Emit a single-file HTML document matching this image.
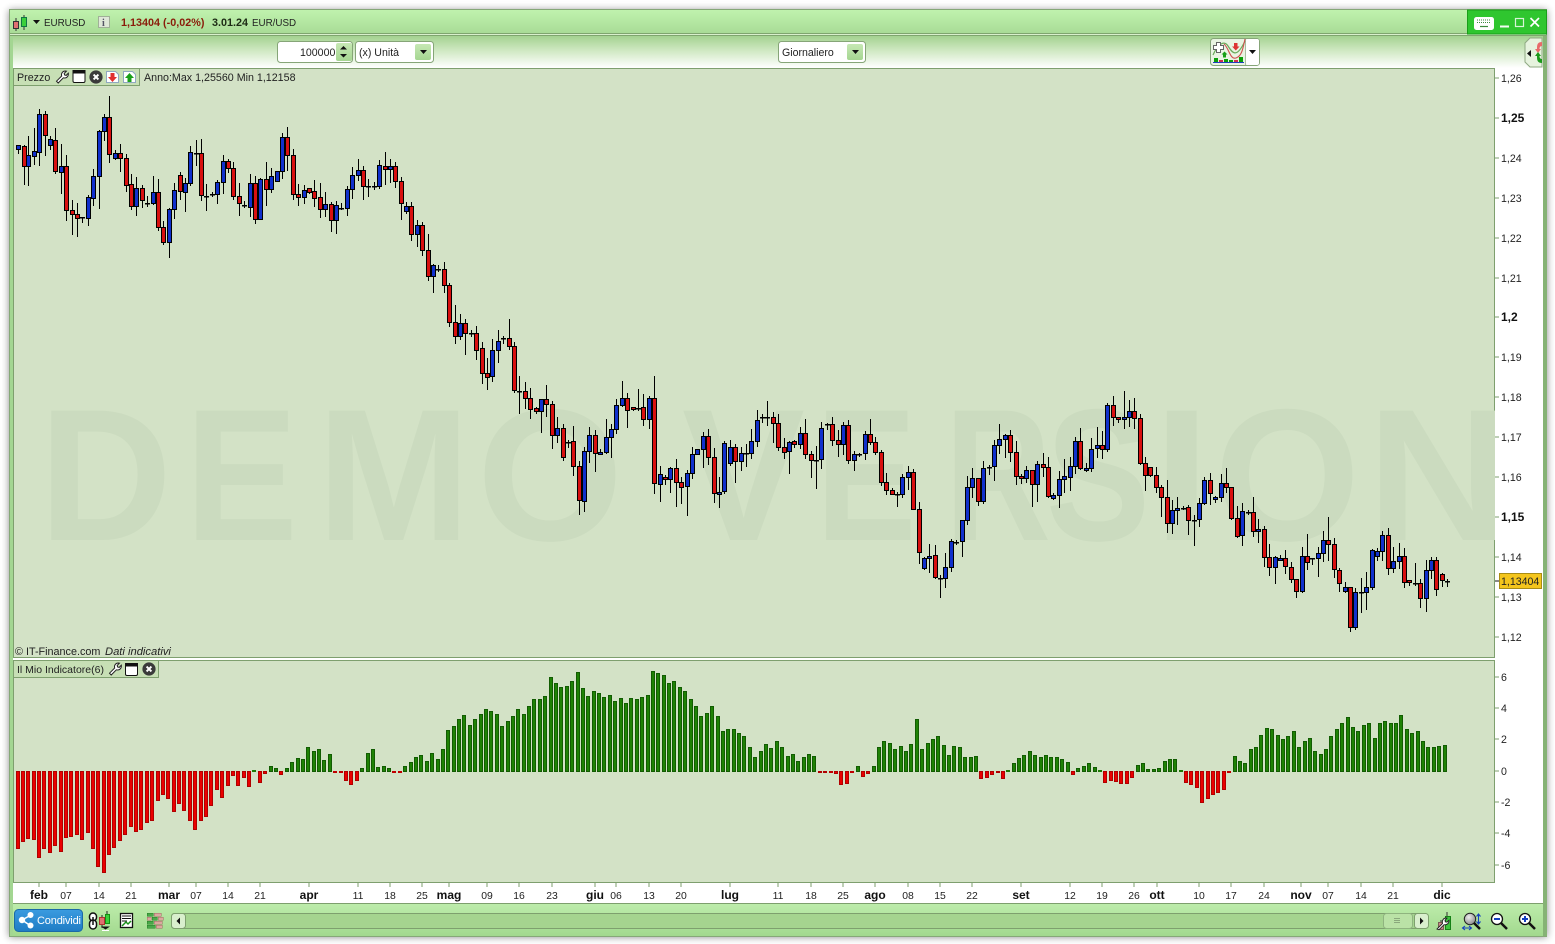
<!DOCTYPE html>
<html lang="it"><head><meta charset="utf-8"><title>EURUSD</title>
<style>
html,body{margin:0;padding:0;background:#fff;width:1555px;height:944px;overflow:hidden}
svg{position:absolute;left:0;top:0;display:block}
text{font-family:"Liberation Sans",Arial,sans-serif;font-size:10.6px;fill:#222}
.b{font-weight:bold;font-size:12px;fill:#111}
.a{font-size:10.4px;fill:#222}
.m{text-anchor:middle}
.w{font-size:188px;font-weight:bold;fill:#cbdbbf}
</style></head><body>
<svg width="1555" height="944" viewBox="0 0 1555 944" xmlns="http://www.w3.org/2000/svg">
<defs>
<linearGradient id="gt" x1="0" y1="0" x2="0" y2="1"><stop offset="0" stop-color="#c0f2ae"/><stop offset="1" stop-color="#a9dc97"/></linearGradient>
<linearGradient id="gb" x1="0" y1="0" x2="0" y2="1"><stop offset="0" stop-color="#bdecab"/><stop offset="1" stop-color="#a2d98e"/></linearGradient>
<linearGradient id="gr" x1="0" y1="0" x2="0" y2="1"><stop offset="0" stop-color="#a4d290"/><stop offset=".45" stop-color="#cfe8c2"/><stop offset="1" stop-color="#fff"/></linearGradient>
<linearGradient id="gbtn" x1="0" y1="0" x2="0" y2="1"><stop offset="0" stop-color="#c6e8b4"/><stop offset="1" stop-color="#a5d691"/></linearGradient>
<linearGradient id="gblue" x1="0" y1="0" x2="0" y2="1"><stop offset="0" stop-color="#3a9be0"/><stop offset="1" stop-color="#1f7cc4"/></linearGradient>
<radialGradient id="gball" cx=".4" cy=".35" r=".7"><stop offset="0" stop-color="#eee"/><stop offset="1" stop-color="#888"/></radialGradient>
<filter id="sh" x="-2%" y="-2%" width="104%" height="104%"><feGaussianBlur stdDeviation="4"/></filter>
<clipPath id="cp"><rect x="14" y="69" width="1481" height="588"/></clipPath>
<symbol id="wr" viewBox="0 0 14 14"><path d="M1.5 11.2 L6.7 6 C5.9 3.4 7.6 1 10.4 1 L11.4 1.2 L9.2 3.4 L9.6 5 L11.2 5.4 L13.3 3.2 C13.8 6.3 11.4 8.7 8.4 7.8 L3.2 13 Z" fill="#fff" stroke="#222" stroke-width="1"/></symbol>
<symbol id="wn" viewBox="0 0 13 13"><rect x=".5" y=".5" width="12" height="12" rx="1.5" fill="#fff" stroke="#111"/><rect x="0" y="0" width="13" height="3.5" fill="#111"/></symbol>
<symbol id="cl" viewBox="0 0 14 14"><circle cx="7" cy="7" r="6.6" fill="#3a3a3a"/><path d="M4.6 4.6 L9.4 9.4 M9.4 4.6 L4.6 9.4" stroke="#fff" stroke-width="2"/></symbol>
</defs>

<!-- window -->
<rect x="9" y="10" width="1538" height="927" fill="#000" opacity=".45" filter="url(#sh)"/>
<rect x="9.5" y="9.5" width="1537" height="927" fill="#8ab879" stroke="#86a878"/>
<rect x="11" y="11" width="1532" height="925" fill="#a8dc98"/>
<rect x="10" y="10" width="1536" height="23" fill="url(#gt)"/>
<rect x="10" y="33" width="1536" height="1" fill="#7fa56f"/>
<rect x="10" y="34" width="1536" height="1" fill="#d8f0cc"/>
<rect x="10" y="35" width="1536" height="1" fill="#7fa56f"/>
<rect x="13" y="36" width="1530" height="32" fill="url(#gr)"/>
<rect x="13" y="68" width="1530" height="836" fill="#fff"/>
<rect x="10" y="36" width="3" height="900" fill="#a3d692"/>
<rect x="1543" y="36" width="4" height="900" fill="#86b375"/>

<!-- panes -->
<rect x="13.5" y="68.5" width="1481" height="589" fill="#d3e2c6" stroke="#7e9f6e"/>
<rect x="13.5" y="660.5" width="1481" height="222" fill="#d3e2c6" stroke="#7e9f6e"/>

<!-- watermark -->
<g clip-path="url(#cp)">
<text class="w" transform="translate(39 540) scale(.98 1)">D</text>
<text class="w" transform="translate(185 540) scale(.9 1)">E</text>
<text class="w" transform="translate(317 540) scale(.98 1)">M</text>
<text class="w" transform="translate(477 540)">O</text>
<text class="w" transform="translate(682 540) scale(.98 1)">V</text>
<text class="w" transform="translate(816 540) scale(.8 1)">E</text>
<text class="w" transform="translate(945 540) scale(.78 1)">R</text>
<text class="w" transform="translate(1046 540) scale(.83 1)">S</text>
<text class="w" transform="translate(1153 540) scale(1.1 1)">I</text>
<text class="w" transform="translate(1214 540)">O</text>
<text class="w" transform="translate(1367 540) scale(1.05 1)">N</text>
</g>

<!-- chart content -->
<g id="ind" shape-rendering="crispEdges"></g>
<g id="cnd" shape-rendering="crispEdges"></g>

<!-- price axis -->
<g stroke="#7e9f6e" shape-rendering="crispEdges">
<path d="M1495 78h4M1495 118h4M1495 158h4M1495 198h4M1495 238h4M1495 278h4M1495 317h4M1495 357h4M1495 397h4M1495 437h4M1495 477h4M1495 517h4M1495 557h4M1495 597h4M1495 637h4M1495 677h4M1495 708h4M1495 739h4M1495 771h4M1495 802h4M1495 833h4M1495 865h4"/>
</g>
<path d="M1495 581h4" stroke="#111" shape-rendering="crispEdges"/>
<g>
<text x="1501" y="82">1,26</text><text x="1501" y="122" class="b">1,25</text><text x="1501" y="162">1,24</text>
<text x="1501" y="202">1,23</text><text x="1501" y="242">1,22</text><text x="1501" y="282">1,21</text>
<text x="1501" y="321" class="b">1,2</text><text x="1501" y="361">1,19</text><text x="1501" y="401">1,18</text>
<text x="1501" y="441">1,17</text><text x="1501" y="481">1,16</text><text x="1501" y="521" class="b">1,15</text>
<text x="1501" y="561">1,14</text><text x="1501" y="601">1,13</text><text x="1501" y="641">1,12</text>
<text x="1501" y="681">6</text><text x="1501" y="712">4</text><text x="1501" y="743">2</text><text x="1501" y="775">0</text>
<text x="1501" y="806">-2</text><text x="1501" y="837">-4</text><text x="1501" y="869">-6</text>
</g>
<rect x="1499.5" y="573.5" width="42" height="15" fill="#f4c51c" stroke="#a98c14" shape-rendering="crispEdges"/>
<text x="1501" y="585" style="font-size:10.6px;fill:#222">1,13404</text>

<!-- date axis -->
<g stroke="#7e9f6e" shape-rendering="crispEdges"><path d="M39 883v4M66 883v4M99 883v4M131 883v4M169 883v4M196 883v4M228 883v4M260 883v4M309 883v4M358 883v4M390 883v4M422 883v4M449 883v4M487 883v4M519 883v4M552 883v4M595 883v4M616 883v4M649 883v4M681 883v4M730 883v4M778 883v4M811 883v4M843 883v4M875 883v4M908 883v4M940 883v4M972 883v4M1021 883v4M1070 883v4M1102 883v4M1134 883v4M1157 883v4M1199 883v4M1231 883v4M1264 883v4M1301 883v4M1328 883v4M1361 883v4M1393 883v4M1442 883v4"/></g>
<g class="m">
<text class="b m" x="39" y="899">feb</text><text class="a m" x="66" y="899">07</text><text class="a m" x="99" y="899">14</text><text class="a m" x="131" y="899">21</text>
<text class="b m" x="169" y="899">mar</text><text class="a m" x="196" y="899">07</text><text class="a m" x="228" y="899">14</text><text class="a m" x="260" y="899">21</text>
<text class="b m" x="309" y="899">apr</text><text class="a m" x="358" y="899">11</text><text class="a m" x="390" y="899">18</text><text class="a m" x="422" y="899">25</text>
<text class="b m" x="449" y="899">mag</text><text class="a m" x="487" y="899">09</text><text class="a m" x="519" y="899">16</text><text class="a m" x="552" y="899">23</text>
<text class="b m" x="595" y="899">giu</text><text class="a m" x="616" y="899">06</text><text class="a m" x="649" y="899">13</text><text class="a m" x="681" y="899">20</text>
<text class="b m" x="730" y="899">lug</text><text class="a m" x="778" y="899">11</text><text class="a m" x="811" y="899">18</text><text class="a m" x="843" y="899">25</text>
<text class="b m" x="875" y="899">ago</text><text class="a m" x="908" y="899">08</text><text class="a m" x="940" y="899">15</text><text class="a m" x="972" y="899">22</text>
<text class="b m" x="1021" y="899">set</text><text class="a m" x="1070" y="899">12</text><text class="a m" x="1102" y="899">19</text><text class="a m" x="1134" y="899">26</text>
<text class="b m" x="1157" y="899">ott</text><text class="a m" x="1199" y="899">10</text><text class="a m" x="1231" y="899">17</text><text class="a m" x="1264" y="899">24</text>
<text class="b m" x="1301" y="899">nov</text><text class="a m" x="1328" y="899">07</text><text class="a m" x="1361" y="899">14</text><text class="a m" x="1393" y="899">21</text>
<text class="b m" x="1442" y="899">dic</text>
</g>

<!-- title bar -->
<g shape-rendering="crispEdges">
<path d="M16 18v13M24 15v15" stroke="#333"/>
<rect x="13.5" y="21.5" width="5" height="7" fill="#e07070" stroke="#333"/>
<rect x="21.5" y="17.5" width="5" height="9" fill="#3bd03b" stroke="#174"/>
</g>
<path d="M33 20h7l-3.500 4z" fill="#111"/>
<text x="44" y="26" style="font-size:9.8px">EURUSD</text>
<rect x="98.5" y="16.5" width="11" height="11" fill="#dfe8d8" stroke="#a0b098" shape-rendering="crispEdges"/>
<text x="102" y="26" style="font-size:10px;font-family:'Liberation Serif',serif;font-weight:bold;fill:#556">i</text>
<text x="121" y="26" style="font-size:10.8px;font-weight:bold;fill:#8a1c0a">1,13404 (-0,02%)</text>
<text x="212" y="26" style="font-size:10.8px;font-weight:bold;fill:#1c2a14">3.01.24</text>
<text x="252" y="26" style="font-size:9.8px">EUR/USD</text>

<!-- window controls -->
<rect x="1467.5" y="10" width="79" height="24" fill="#2fc62f" stroke="#1a9e1a" shape-rendering="crispEdges"/>
<rect x="1474" y="17" width="20" height="13" rx="2.5" fill="#fff"/>
<path d="M1477 20h14M1477 22.500h14" stroke="#3c8a3c" stroke-width="1" stroke-dasharray="1 1"/>
<path d="M1480 26.500h8" stroke="#3c8a3c" stroke-width="1.200"/>
<path d="M1500 26.500h9" stroke="#fff" stroke-width="2" opacity=".95"/>
<rect x="1515.500" y="18.500" width="8" height="8" fill="none" stroke="#d8f5d8" stroke-width="1.200"/>
<path d="M1530.500 18l8.500 8.500M1539 18l-8.500 8.500" stroke="#fff" stroke-width="1.700"/>

<!-- toolbar -->
<rect x="277.500" y="41.500" width="75" height="21" rx="3" fill="#fff" stroke="#86a578"/>
<text x="300" y="56" style="font-size:10.6px">100000</text>
<rect x="336" y="43" width="16" height="18" rx="2" fill="url(#gbtn)"/>
<path d="M340 49.500h7l-3.500-3.500zM340 54h7l-3.500 3.500z" fill="#111"/>
<rect x="355.500" y="41.500" width="78" height="21" rx="3" fill="#fff" stroke="#86a578"/>
<text x="359" y="56" style="font-size:10.6px">(x) Unità</text>
<rect x="415" y="44" width="16" height="16" rx="2" fill="url(#gbtn)"/>
<path d="M420 50h7l-3.500 4z" fill="#111"/>
<rect x="778.500" y="41.500" width="87" height="21" rx="3" fill="#fff" stroke="#86a578"/>
<text x="782" y="56" style="font-size:10.6px">Giornaliero</text>
<rect x="847" y="44" width="16" height="16" rx="2" fill="url(#gbtn)"/>
<path d="M852 50h7l-3.500 4z" fill="#111"/>

<!-- chart type button -->
<rect x="1210.500" y="38.500" width="49" height="27" rx="3" fill="#e9f4e2" stroke="#86a578"/>
<rect x="1246" y="39" width="13" height="26" rx="2" fill="#fff"/>
<path d="M1245.500 39v26" stroke="#a8bda0"/>
<path d="M1249 50h7l-3.500 4z" fill="#111"/>
<path d="M1213 55C1218 44 1224 40 1228 46S1236 60 1245 41" fill="none" stroke="#6aaa5a" stroke-width="1.200"/>
<path d="M1224 44C1229 48 1230 60 1236 58S1243 48 1245 39" fill="none" stroke="#d05050" stroke-width="1.100"/>
<path d="M1216.500 42.500h4v3h3v4h-3v3h-4v-3h-3v-4h3z" fill="#fff" stroke="#666"/>
<path d="M1234 43h3.500v3.500h2l-3.700 4-3.700-4h1.900z" fill="#dd3333"/>
<path d="M1224.500 51.500l3 3h-1.500v3h-3v-3h-1.500z" fill="#18a018"/>
<g shape-rendering="crispEdges"><rect x="1214" y="58" width="4" height="4" fill="#0aa00a"/><rect x="1219" y="60" width="4" height="2" fill="#d03050"/><rect x="1224" y="59" width="4" height="3" fill="#0aa00a"/><rect x="1229" y="60" width="4" height="2" fill="#0aa00a"/><rect x="1234" y="60" width="4" height="2" fill="#d03050"/><rect x="1239" y="57" width="4" height="5" fill="#0aa00a"/><rect x="1213" y="62" width="31" height="1" fill="#2040c0"/></g>
<!-- side button -->
<path d="M1542 38h-12l-5 5v19l5 5h12z" fill="#e6f3de" stroke="#8fa983"/>
<path d="M1531 50v7l-4-3.500z" fill="#111"/>
<path d="M1542 42c-4 0-5 2-5 6v1h-2l3 4 3-4h-1.500c0-2 1-3 2.500-3z" fill="#e86a6a"/>
<path d="M1542 63c-4 0-5-2-5-6v-1h-2l3-4 3 4h-1.500c0 2 1 3 2.500 3z" fill="#1b9a1b"/>

<!-- price pane tab -->
<rect x="13.500" y="68.500" width="126" height="17" fill="#c7dfb5" stroke="#7e9f6e" shape-rendering="crispEdges"/>
<text x="17" y="81" style="font-size:10.7px">Prezzo</text>
<use href="#wr" x="55" y="70" width="14" height="14"/>
<use href="#wn" x="72.500" y="70" width="13" height="13"/>
<use href="#cl" x="89" y="70" width="14" height="14"/>
<path d="M106.500 71.500h9l3 3v8h-12z" fill="#fff" stroke="#8fa8c0"/>
<path d="M110.500 73h4v4h2.500l-4.500 5-4.500-5h2.500z" fill="#e03030"/>
<path d="M123.500 71.500h9l3 3v8h-12z" fill="#fff" stroke="#8fa8c0"/>
<path d="M129.500 73l4.500 5h-2.500v4h-4v-4h-2.500z" fill="#1aa01a"/>
<text x="144" y="81" style="font-size:10.7px">Anno:Max 1,25560 Min 1,12158</text>
<text x="15" y="655" style="font-size:10.8px">© IT-Finance.com</text>
<text x="105" y="655" style="font-size:11.2px;font-style:italic">Dati indicativi</text>

<!-- indicator tab -->
<rect x="13.500" y="660.500" width="145" height="17" fill="#c7dfb5" stroke="#7e9f6e" shape-rendering="crispEdges"/>
<text x="17" y="673" style="font-size:10.5px">Il Mio Indicatore(6)</text>
<use href="#wr" x="108" y="662" width="14" height="14"/>
<use href="#wn" x="125" y="663" width="13" height="13"/>
<use href="#cl" x="142" y="662" width="14" height="14"/>

<!-- bottom bar -->
<rect x="13" y="904" width="1530" height="32" fill="url(#gb)"/>
<rect x="13" y="903" width="1530" height="1" fill="#7e9f6e"/>
<rect x="14.500" y="909.500" width="68" height="22" rx="4" fill="url(#gblue)" stroke="#1b6aa6"/>
<path d="M31 915l-9 5 9 6" fill="none" stroke="#fff" stroke-width="1.500"/>
<circle cx="22" cy="920" r="3.200" fill="#fff"/><circle cx="30.500" cy="915" r="3" fill="#fff"/><circle cx="30.500" cy="925.500" r="3" fill="#fff"/>
<text x="37" y="924" style="font-size:11px;fill:#fff" textLength="44">Condividi</text>

<!-- chain + candles -->
<rect x="89.500" y="913" width="7" height="8" rx="3.500" fill="#fff" stroke="#111" stroke-width="1.500"/>
<rect x="89.500" y="920" width="7" height="9" rx="3.500" fill="#fff" stroke="#111" stroke-width="1.500"/>
<path d="M93 917v8" stroke="#111" stroke-width="1.500"/>
<g shape-rendering="crispEdges"><path d="M102 915v13M107 911v13" stroke="#222"/><rect x="99.500" y="917.500" width="5" height="7" fill="#e07070" stroke="#b03030"/><rect x="105.500" y="914.500" width="4" height="9" fill="#3bd03b" stroke="#129012"/></g>
<path d="M101 926.500h9l-4.500 3z" fill="#111"/>
<path d="M102 930.500h7" stroke="#fff"/>
<!-- page icon -->
<rect x="120.500" y="913.500" width="12" height="14" fill="#fff" stroke="#111" stroke-width="1.300"/>
<path d="M122 916h9M122 918.500h9M122 921h5" stroke="#111"/>
<path d="M122 926l4-4 2 2 3-3" fill="none" stroke="#1a901a" stroke-width="1.500"/>
<!-- bricks -->
<g shape-rendering="crispEdges"><path d="M147 913h6v3h-6zM147 921h6v3h-6zM147 925h8v3h-8zM152 917h5v3h-5z" fill="#4aa84a" stroke="#258025" stroke-width=".5"/><path d="M154 913h7v3h-7zM147 917h4v3h-4zM158 917h5v3h-5zM154 921h8v3h-8zM156 925h6v3h-6z" fill="#dba89f" stroke="#a06a60" stroke-width=".5"/></g>

<!-- scrollbar -->
<rect x="171.500" y="913.500" width="1256" height="15" rx="3" fill="#a5d48f" stroke="#7ea06e"/>
<rect x="171.500" y="913.500" width="14" height="15" rx="3" fill="#d9efcd" stroke="#7ea06e"/>
<path d="M180 917.500v7l-3.500-3.500z" fill="#111"/>
<rect x="1383.500" y="913.500" width="29" height="15" rx="3" fill="#bae2a6" stroke="#8fb47f"/>
<path d="M1394 918.500h6M1394 920.500h6M1394 922.500h6" stroke="#8aa87c"/>
<rect x="1414.500" y="913.500" width="14" height="15" rx="3" fill="#d9efcd" stroke="#7ea06e"/>
<path d="M1420 917.500v7l3.500-3.500z" fill="#111"/>

<!-- right icons -->
<g shape-rendering="crispEdges"><path d="M1447 912v4M1441 920v3" stroke="#333"/><rect x="1445.500" y="916.500" width="5" height="13" fill="#3cc23c" stroke="#168016"/><rect x="1438.500" y="922.500" width="5" height="7" fill="#c98b85" stroke="#7b5a55"/></g>
<path d="M1437 929l5.500-5.500c-.8-3 1-5.500 3.500-5.500l1 .2-2 2 .3 1.700 1.700.3 2-2c.3 3-2 5-5 4.500l-5 5z" fill="#fff" stroke="#222" stroke-width=".9"/>
<circle cx="1470" cy="919" r="5.700" fill="url(#gball)" stroke="#222" stroke-width="1"/>
<path d="M1474 923l6 6" stroke="#111" stroke-width="2.500"/>
<path d="M1478.500 915v8M1476.500 916.500l2-2.500 2 2.500M1476.500 921.500l2 2.500 2-2.500M1463 928h8M1465 926l-2.500 2 2.500 2M1469 926l2.500 2-2.500 2" fill="none" stroke="#1540c0" stroke-width="1.100"/>
<circle cx="1497" cy="919" r="5.500" fill="#fff" stroke="#111" stroke-width="1.300"/>
<path d="M1494 919h6" stroke="#1540c0" stroke-width="2"/>
<path d="M1501 923l6 6" stroke="#111" stroke-width="2.500"/>
<circle cx="1525" cy="919" r="5.500" fill="#fff" stroke="#111" stroke-width="1.300"/>
<path d="M1522 919h6M1525 916v6" stroke="#1540c0" stroke-width="2"/>
<path d="M1529 923l6 6" stroke="#111" stroke-width="2.500"/>
</svg>
<script>
var S=[[10,90,`25 b 165 176 165 190
41 r 169 227 165 282
55 b 196 227 138 285
73 b 184 197 114 222
88 b 72 185 57 224
106 r 72 136 63 195
121 b 148 166 138 177
136 r 151 244 114 250
154 b 229 245 162 309
169 r 229 361 195 390
187 r 361 371 330 432
202 r 371 383 339 438
217 d 382 382 382 396
235 b 322 383 315 405
250 b 259 325 237 345
268 b 124 259 120 354
283 b 82 124 72 150
298 r 82 193 18 216
316 b 190 203 181 207
331 r 190 205 162 243
349 r 205 284 193 303
364 r 283 349 252 357
379 b 295 347 262 375
397 r 295 331 285 351
412 d 338 338 319 347
430 b 307 338 258 343
445 r 307 412 267 419
460 r 412 455 393 462
478 b 358 455 354 501
493 b 301 358 279 384
511 r 256 304 246 327
526 b 280 305 264 363
541 b 187 280 168 285
559 d 188 188 150 225
574 r 190 316 148 330
589 d 318 318 282 360
607 d 312 312 306 318
622 b 277 313 270 339
640 b 214 277 195 309
655 r 214 235 208 245`],[230,120,`10 r 145 227 125 236
28 r 229 248 189 285
43 d 255 255 244 262
61 b 190 260 163 288
76 r 190 296 168 309
91 b 178 296 175 296
109 r 178 206 126 255
124 b 169 206 145 216
142 b 154 182 154 182
157 b 52 154 40 173
172 r 52 106 22 150
190 r 106 223 87 237
205 r 223 230 193 254
223 b 211 230 196 249
238 r 203 215 203 218
253 r 214 233 181 258
271 r 232 268 190 290
286 b 253 268 217 288
304 r 253 301 247 332
319 b 256 301 243 338
334 d 263 263 250 266
352 b 208 265 198 284
367 b 166 208 142 234
385 b 151 166 118 180
400 r 151 199 139 236
415 d 199 199 178 228
433 d 199 199 186 207
448 b 136 199 121 205
466 r 137 148 97 191
481 b 139 148 117 186
496 r 139 184 125 200
514 r 184 250 172 297
529 b 259 274 247 278
544 r 259 343 247 360
562 b 316 343 301 378
577 r 316 391 307 404
595 r 391 469 343 480
610 b 436 469 433 515
625 d 446 446 436 452
643 r 448 496 427 515`],[445,300,`13 r -44 67 -50 77
31 r 67 109 15 129
46 b 70 109 42 117
61 r 70 100 57 162
79 d 100 100 90 107
94 r 100 149 79 177
112 r 145 220 126 249
127 r 220 230 175 267
142 b 151 229 118 243
160 b 124 151 91 186
175 d 115 115 109 130
193 r 115 139 57 147
208 r 139 271 126 276
223 d 272 272 228 339
241 r 274 295 246 324
256 r 295 328 265 354
274 r 325 334 320 339
289 b 298 334 298 396
304 r 298 313 255 348
322 r 313 406 304 444
337 b 385 406 351 426
355 r 385 472 373 480
370 d 425 425 420 441
385 r 424 499 378 525
403 r 499 601 484 642
418 b 454 604 441 633
433 b 406 454 381 486
451 r 406 460 391 513
466 b 457 463 447 463
484 b 412 457 357 460
499 b 388 412 373 471
514 b 316 388 297 399
532 b 295 316 243 318
547 r 295 331 280 381
565 r 322 328 320 330
580 d 324 324 267 330
595 r 322 358 282 375
613 b 295 358 289 384
628 r 295 550 228 579
646 b 523 553 499 603
661 r 532 538 525 553
676 b 505 538 502 576
694 r 505 547 477 618
709 r 547 562 531 609
727 b 520 559 510 645
742 b 463 520 441 534`],[695,390,`7 b 178 193 178 193
25 b 139 178 126 231
40 r 139 202 118 222
58 r 202 310 175 336
73 b 305 311 262 351
88 b 160 304 154 309
106 b 172 220 151 225
121 r 172 214 163 276
139 b 190 214 172 240
154 d 190 190 163 228
169 b 154 190 117 204
187 b 91 154 60 168
202 d 81 81 73 96
217 d 81 81 33 105
235 r 82 100 67 156
250 r 100 172 72 180
268 r 172 187 145 204
283 b 157 184 154 249
298 r 154 163 150 171
316 b 130 163 111 175
331 r 130 193 87 204
349 r 193 211 184 261
364 d 210 210 168 294
379 b 115 208 97 234
397 d 102 102 99 117
412 r 103 151 81 165
430 r 151 163 120 198
445 b 106 163 97 193
460 r 106 211 90 219
478 b 193 211 184 240
493 d 192 192 190 197
511 b 133 190 123 207
526 r 133 157 87 163
541 r 157 187 141 193
559 r 187 277 181 285
574 r 277 301 250 312
592 r 301 311 295 313
607 d 312 312 307 348
622 b 262 313 253 321
640 b 247 262 229 297
655 r 247 358 238 358
673 r 358 487 337 519
688 b 505 535 502 538
703 b 497 505 463 546
721 r 496 562 466 565
736 d 564 564 556 622
751 b 532 565 490 591
769 b 454 532 447 543`],[955,385,`4 d 470 470 465 476
22 b 406 469 406 513
37 b 307 406 273 417
52 b 280 307 249 336
70 r 280 349 280 361
85 b 250 349 228 354
103 d 245 245 240 267
118 b 181 244 166 285
133 b 163 181 117 204
151 b 151 163 148 217
166 r 151 202 136 228
184 r 202 274 168 297
199 r 272 280 266 294
214 b 256 280 243 290
232 r 256 298 256 363
247 b 238 298 229 348
265 r 238 247 205 273
280 r 247 334 216 337
295 b 331 338 325 341
313 b 283 331 259 366
328 b 274 283 222 321
346 b 244 275 216 315
361 b 169 244 157 265
376 r 169 250 129 253
394 b 248 254 235 257
409 b 193 248 160 258
427 b 181 190 126 217
442 r 181 193 138 219
457 b 61 193 55 198
475 r 61 97 33 120
490 r 97 103 97 112
508 b 97 103 18 129
523 b 79 97 45 123
538 r 79 100 40 129
556 r 100 235 87 238
571 r 235 271 216 315
586 r 247 271 247 272
604 r 271 307 247 322
619 r 307 337 301 393
637 r 337 415 285 441
652 b 376 415 346 444
667 b 370 376 336 417
685 d 369 369 364 372
700 r 367 406 361 447
718 d 405 405 390 480
733 b 355 403 340 423
748 b 286 355 277 357
766 r 286 325 265 357`],[1195,460,`61 b 112 118 108 127
79 b 70 112 43 122
94 r 70 82 25 96
109 r 82 175 82 178
127 r 175 227 138 232
142 b 154 226 130 254
160 d 157 157 151 162
175 r 157 214 111 228
190 b 208 214 178 246
208 r 208 292 199 319
223 r 292 322 252 345
241 b 290 322 288 369
256 b 295 301 286 301
271 r 295 319 270 338
289 r 322 358 307 365
304 r 358 394 358 411
322 b 289 394 262 397
337 r 289 307 222 327
352 d 294 294 294 312
370 b 280 295 262 348
385 b 241 280 214 304
400 r 241 253 171 300
418 r 253 328 235 351
433 r 331 370 325 393
451 b 382 394 367 396
466 r 382 502 382 513
481 b 397 502 385 507
499 d 397 397 353 456
514 b 382 397 336 447
532 b 271 382 268 386
547 b 274 289 265 299
562 b 226 274 213 300
580 r 226 325 205 342
595 b 304 325 262 336
613 b 289 304 250 325
628 r 289 367 265 380
643 r 361 367 361 376
661 d 369 369 309 376
676 r 370 415 358 441
694 b 331 415 301 453
709 b 301 331 290 355
724 r 301 388 292 405
742 r 343 361 340 377
757 d 363 363 358 377`]];
var w='',h='';
S.forEach(function(s){s[2].split('\n').forEach(function(l){var p=l.trim().split(' ');
var x=Math.round(s[0]+p[0]/3),t=Math.round(s[1]+p[2]/3),b=Math.round(s[1]+p[3]/3),u=Math.round(s[1]+p[4]/3),d=Math.round(s[1]+p[5]/3);
w+='M'+(x+.5)+' '+u+'V'+(d+1);
if(p[1]=='d'){h+='<rect x="'+(x-2)+'" y="'+t+'" width="5" height="1.500" fill="#000"/>'}
else{h+='<rect x="'+(x-1.5)+'" y="'+(t+.5)+'" width="4" height="'+Math.max(b-t,1)+'" fill="'+(p[1]=='r'?'#d81010':'#1030cc')+'" stroke="#000"/>'}
})});
document.getElementById('cnd').innerHTML='<path d="'+w+'" stroke="#000" fill="none"/>'+h;
var V=[-78,-71,-68,-69,-87,-78,-82,-75,-81,-67,-66,-64,-69,-62,-78,-96,-102,-84,-77,-70,-64,-56,-61,-59,-52,-50,-30,-24,-28,-41,-33,-40,-50,-59,-50,-46,-35,-19,-27,-15,-5,-15,-7,-16,1,-12,-3,5,3,-4,3,9,13,12,24,20,22,11,17,-1,-1,-10,-14,-10,3,18,22,4,5,3,-1,-1,
5,9,14,16,10,18,12,22,
41,45,52,56,46,52,57,62,60,57,45,50,55,62,57,65,72,72,75,94,88,84,85,90,99,83,75,80,78,74,76,70,73,68,73,72,74,76,100,98,96,88,90,84,80,72,65,55,58,65,55,40,42,42,38,35,24,14,20,27,23,30,24,15,17,10,14,17,15,
-2,-2,-1,-3,-14,-13,-1,5,-6,-3,5,24,30,28,22,25,20,27,52,22,28,32,35,26,16,25,24,14,14,15,-8,-7,-4,-2,-8,1,8,13,16,20,16,14,16,14,14,12,9,-4,3,5,8,4,1,-12,-10,-11,-13,-13,-7,6,8,2,2,3,10,12,12,1,-12,-14,-17,-32,-28,-24,-22,-19,-1,15,10,8,22,24,36,43,42,36,32,35,40,24,30,33,20,17,22,35,42,48,54,44,40,46,48,33,48,50,48,48,56,42,38,40,30,24,24,25,26];
var g='';
V.forEach(function(v,i){var x=Math.floor(18+5.385*i);var up=v>0,a=Math.abs(v);
var y=up?771-a:771;var hh=up?a+1:a;
if(a<=1.5){g+='<rect x="'+(x-2)+'" y="'+(up?770:771)+'" width="4" height="2" fill="'+(up?'#1c7a04':'#c00000')+'"/>';return}
g+='<rect x="'+(x-1.5)+'" y="'+(y+.5)+'" width="3" height="'+(hh-1)+'" fill="'+(up?'#1f8205':'#ea0000')+'" stroke="'+(up?'#125c02':'#b00000')+'"/>'});
document.getElementById('ind').innerHTML=g;
</script>
</body></html>
